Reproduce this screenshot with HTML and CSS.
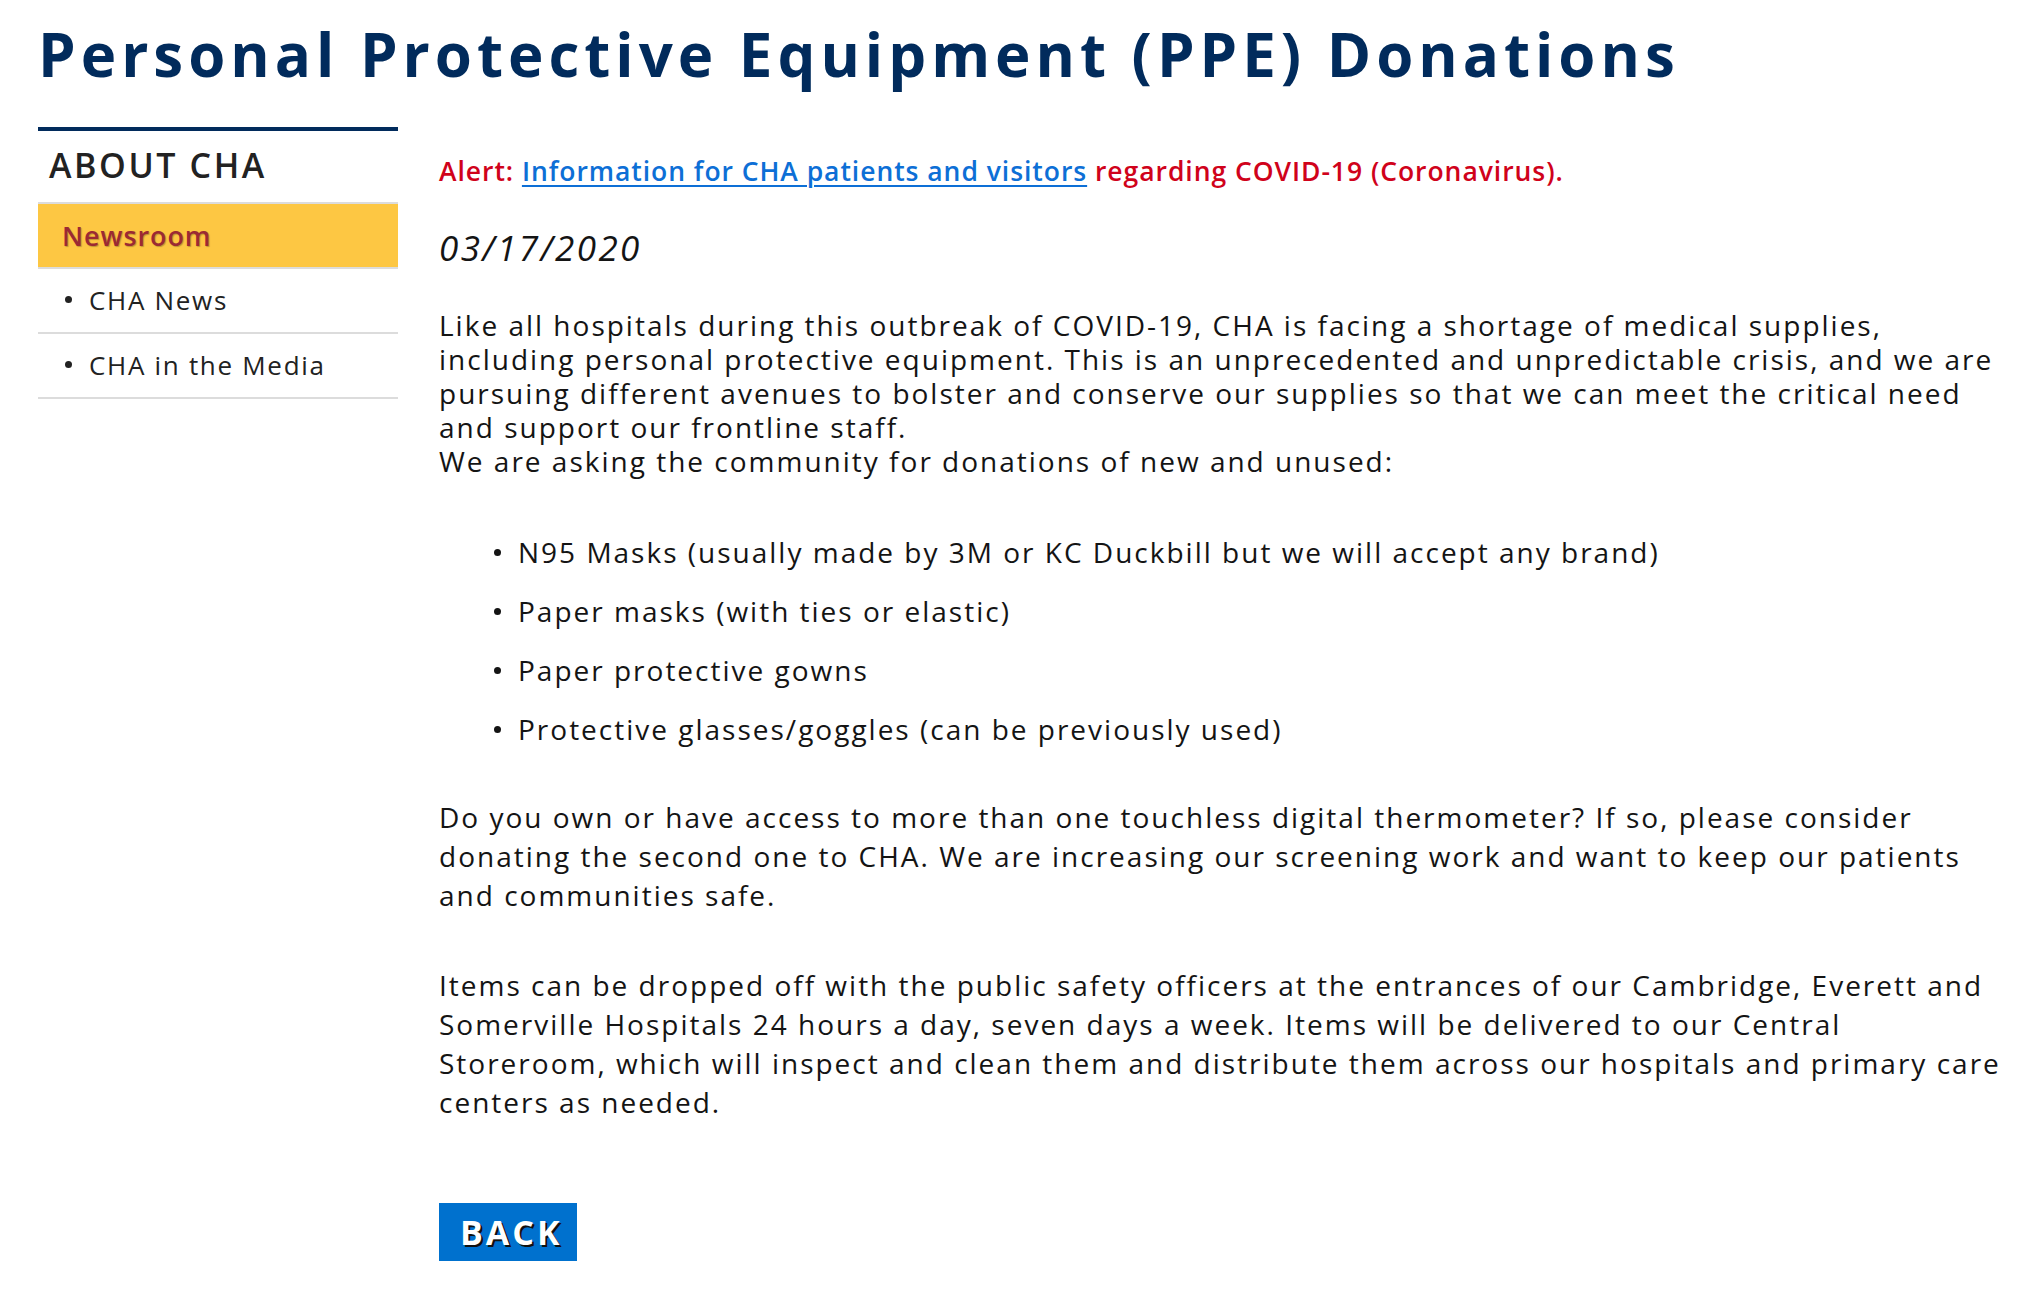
FILE: index.html
```html
<!DOCTYPE html>
<html lang="en">
<head>
<meta charset="utf-8">
<title>Personal Protective Equipment (PPE) Donations</title>
<link rel="stylesheet" href="styles.css">
</head>
<body>
<div class="page">
  <h1 class="page-title">Personal Protective Equipment (PPE) Donations</h1>
  <div class="layout">
    <aside class="sidebar">
      <h2 class="sidebar-heading">ABOUT CHA</h2>
      <ul class="side-nav">
        <li class="side-item side-item--active"><a href="#">Newsroom</a></li>
        <li class="side-item side-item--sub"><a href="#">CHA News</a></li>
        <li class="side-item side-item--sub"><a href="#">CHA in the Media</a></li>
      </ul>
    </aside>
    <main class="content">
      <p class="alert"><span class="alert-label">Alert:</span> <a class="alert-link" href="#">Information for CHA patients and visitors</a> regarding COVID-19 (Coronavirus).</p>
      <p class="date">03/17/2020</p>
      <p class="intro">Like all hospitals during this outbreak of COVID-19, CHA is facing a shortage of medical supplies,<br>including personal protective equipment. This is an unprecedented and unpredictable crisis, and we are<br>pursuing different avenues to bolster and conserve our supplies so that we can meet the critical need<br>and support our frontline staff.<br>We are asking the community for donations of new and unused:</p>
      <ul class="items">
        <li>N95 Masks (usually made by 3M or KC Duckbill but we will accept any brand)</li>
        <li>Paper masks (with ties or elastic)</li>
        <li>Paper protective gowns</li>
        <li>Protective glasses/goggles (can be previously used)</li>
      </ul>
      <p class="para">Do you own or have access to more than one touchless digital thermometer? If so, please consider<br>donating the second one to CHA. We are increasing our screening work and want to keep our patients<br>and communities safe.</p>
      <p class="para para--last">Items can be dropped off with the public safety officers at the entrances of our Cambridge, Everett and<br>Somerville Hospitals 24 hours a day, seven days a week. Items will be delivered to our Central<br>Storeroom, which will inspect and clean them and distribute them across our hospitals and primary care<br>centers as needed.</p>
      <a class="back-btn" href="#">BACK</a>
    </main>
  </div>
</div>
</body>
</html>
```
FILE: styles.css
```css
* { box-sizing: border-box; }

html, body {
  margin: 0;
  padding: 0;
  background: #ffffff;
}

body {
  font-family: "Open Sans", "Liberation Sans", sans-serif;
  color: #141414;
}

.page {
  padding: 24px 10px 40px 38px;
}

.page-title {
  margin: 0;
  font-size: 60px;
  line-height: 60px;
  font-weight: 700;
  letter-spacing: 5px;
  color: #012b5c;
  white-space: nowrap;
}

.layout {
  display: flex;
  align-items: flex-start;
  gap: 41px;
  margin-top: 43px;
}

/* ---------- sidebar ---------- */
.sidebar {
  flex: 0 0 360px;
  border-top: 4px solid #012b5c;
}

.sidebar-heading {
  margin: 0;
  padding: 14px 0 17px 11px;
  font-size: 34px;
  line-height: 40px;
  font-weight: 600;
  letter-spacing: 2.6px;
  color: #222222;
}

.side-nav {
  list-style: none;
  margin: 0;
  padding: 0;
}

.side-item {
  border-bottom: 2px solid #dcdcdc;
}

.side-item a {
  display: block;
  height: 63px;
  line-height: 63px;
  text-decoration: none;
  white-space: nowrap;
}

.side-item--active {
  border-top: 2px solid #dcdcdc;
  background: #fdc743;
}

.side-item--active a {
  padding-left: 24px;
  font-size: 27px;
  font-weight: 600;
  letter-spacing: 0.9px;
  color: #9b2a33;
  text-shadow: 1px 1px 1px rgba(0, 0, 0, 0.25);
}

.side-item--sub a {
  padding-left: 27px;
  font-size: 26px;
  font-weight: 400;
  letter-spacing: 1.7px;
  color: #222222;
}

.side-item--sub a::before {
  content: "";
  display: inline-block;
  width: 7px;
  height: 7px;
  border-radius: 50%;
  background: #222222;
  margin-right: 17px;
  vertical-align: 7px;
}

/* ---------- content ---------- */
.content {
  flex: 1 1 auto;
  min-width: 0;
  padding-top: 27px;
}

.content p {
  margin: 0;
}

.alert {
  font-size: 26.5px;
  line-height: 34px;
  font-weight: 600;
  letter-spacing: 0.95px;
  color: #d0021b;
  white-space: nowrap;
}

.alert-link {
  color: #0d6fd6;
  text-decoration: underline;
  text-decoration-thickness: 2px;
  text-underline-offset: 4px;
}

.content .date {
  margin-top: 40px;
  font-size: 35px;
  line-height: 40px;
  font-style: italic;
  font-weight: 400;
  letter-spacing: 2.4px;
  color: #141414;
}

.intro,
.para,
.items {
  font-size: 28px;
  letter-spacing: 2px;
  color: #141414;
}

.content .intro {
  margin-top: 40px;
  line-height: 34px;
}

.items {
  list-style: none;
  margin: 57px 0 0 0;
  padding: 0 0 0 55px;
  line-height: 34px;
}

.items li {
  margin-bottom: 25px;
}

.items li::before {
  content: "";
  display: inline-block;
  width: 7px;
  height: 7px;
  border-radius: 50%;
  background: #141414;
  margin-right: 17px;
  vertical-align: 7px;
}

.content .para {
  margin-top: 52px;
  line-height: 39px;
}

.content .para--last {
  margin-top: 51px;
}

.back-btn {
  display: inline-block;
  margin-top: 81px;
  height: 58px;
  padding: 0 14px 0 21px;
  line-height: 58px;
  background: #0071ce;
  color: #ffffff;
  font-size: 34px;
  font-weight: 700;
  letter-spacing: 3px;
  text-decoration: none;
  text-shadow: 2px 2px 0 #111111;
}
```
